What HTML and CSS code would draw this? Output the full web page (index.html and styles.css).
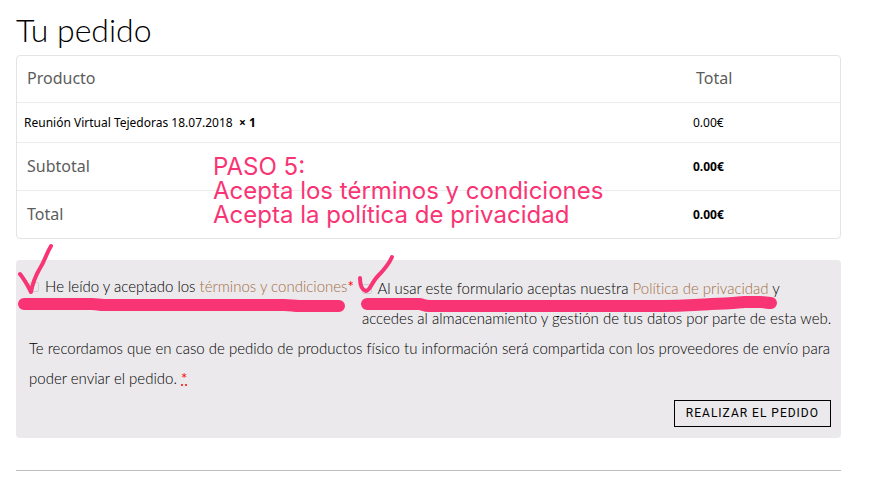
FILE: index.html
```
<!DOCTYPE html>
<html lang="es">
<head>
    <meta charset="UTF-8">
    <meta name="viewport" content="width=device-width, initial-scale=1">
    <title>Tu pedido</title>
    <link rel="stylesheet" href="styles.css">
</head>
<body>
    <main class="checkout">
        <h1>Tu pedido</h1>

        <div class="order">
            <table class="order-table">
                <thead>
                    <tr>
                        <th scope="col">Producto</th>
                        <th scope="col" class="total">Total</th>
                    </tr>
                </thead>
                <tbody>
                    <tr class="item">
                        <td>Reunión Virtual Tejedoras 18.07.2018 &nbsp;<strong>× 1</strong></td>
                        <td>0.00€</td>
                    </tr>
                </tbody>
                <tfoot>
                    <tr>
                        <th scope="row">Subtotal</th>
                        <td>0.00€</td>
                    </tr>
                    <tr>
                        <th scope="row">Total</th>
                        <td>0.00€</td>
                    </tr>
                </tfoot>
            </table>
            <p class="step-note">PASO 5:<br>Acepta los términos y condiciones<br>Acepta la política de privacidad</p>
        </div>

        <form class="place-order">
            <div class="terms">
                <input type="checkbox" id="terms">
                <label for="terms">He leído y aceptado los <a href="#">términos y condiciones</a><span class="required">*</span></label>
            </div>
            <div class="privacy">
                <input type="checkbox" id="privacy">
                <label for="privacy">Al usar este formulario aceptas nuestra <a href="#">Política de privacidad</a> y<br>accedes al almacenamiento y gestión de tus datos por parte de esta web.<br>Te recordamos que en caso de pedido de productos físico tu información será compartida con los proveedores de envío para poder enviar el pedido. <abbr class="required" title="obligatorio">*</abbr></label>
            </div>
            <button type="button">Realizar el pedido</button>

            <!-- hand drawn marks over the two checkboxes -->
            <svg class="marks" width="780" height="75" viewBox="0 -20 780 75" aria-hidden="true">
                <g fill="none" stroke="#f93474" stroke-linecap="round" stroke-linejoin="round">
                    <path stroke-width="4" d="M4 14C8 19 12 26 15 32C17 22 19 17 23 10C29 1 30-6 35-14"/>
                    <path stroke-width="4" d="M344 18C344 25 346 30 350 31C354 31 356 22 361 17C367 11 372 6 376-3"/>
                    <path stroke-width="12" d="M8 44H76C81 44 83 45 88 45H268C275 45 277 46 284 46H323"/>
                    <path stroke-width="12" d="M351 44H403C407 44 407 46 414 46H630C665 46 679 45 695 44C710 44 718 43 728 42H744C748 42 751 43 755 43"/>
                </g>
            </svg>
        </form>

        <hr>
    </main>
</body>
</html>
```
FILE: styles.css
```
* {
    box-sizing: border-box;
}

body {
    margin: 0;
    background-color: #fff;
    color: #000;
    font-family: Lato, sans-serif;
    font-weight: 300;
    font-size: 15px;
}

.checkout {
    padding: 10px 42px 0 16px;
}

h1 {
    margin: 0 0 5px;
    font-size: 32px;
    font-weight: 300;
    line-height: 40px;
}

.order {
    position: relative;
}

.order-table {
    width: 100%;
    border: 1px solid #e4e4e4;
    border-radius: 4px;
    border-spacing: 0;
    font-family: "Noto Sans", sans-serif;
    font-size: 12px;
    font-weight: 400;
}

.order-table th,
.order-table td {
    height: 48px;
    padding: 0 7px;
    border-top: 1px solid #ececec;
    text-align: left;
}

.order-table th {
    padding: 0 10px 2px;
    color: #5c5c5c;
    font-size: 16px;
    font-weight: 400;
}

.order-table thead th {
    height: 46px;
    border-top: none;
}

.order-table .total {
    width: 154px;
}

.order-table .item td {
    height: 40px;
}

.order-table tfoot td {
    font-weight: 700;
}

.step-note {
    position: absolute;
    top: 100px;
    left: 197px;
    margin: 0;
    color: #f93474;
    font-family: Inter, sans-serif;
    font-size: 24px;
    font-weight: 400;
    line-height: 24px;
    white-space: nowrap;
}

.place-order {
    position: relative;
    display: flow-root;
    margin-top: 21px;
    padding: 11px 4px 11px 13px;
    background-color: #ebe9ec;
    border-radius: 4px;
    font-variant-ligatures: none;
    line-height: 30px;
}

.terms {
    float: left;
    padding-bottom: 8px;
    margin-right: 8px;
}

.privacy {
    padding-top: 2px;
}

.place-order input {
    appearance: none;
    width: 10px;
    height: 10px;
    margin: 0 2px 0 0;
    border: 1px solid #cfcdd0;
    border-radius: 2px;
}

.place-order a {
    color: #a46f45;
    text-decoration: none;
}

.required {
    color: #f00;
    font-weight: 400;
}

.place-order button {
    display: block;
    margin: 7px 6px 0 auto;
    padding: 0 11px;
    background: none;
    border: 1px solid #000;
    color: #000;
    font-family: Roboto, sans-serif;
    font-size: 12px;
    letter-spacing: 1px;
    line-height: 25px;
    text-transform: uppercase;
    cursor: pointer;
}

.marks {
    position: absolute;
    top: -20px;
    left: 0;
    pointer-events: none;
}

hr {
    margin: 32px 0 0;
    border: none;
    border-top: 1px solid #bdbdbd;
}
```
